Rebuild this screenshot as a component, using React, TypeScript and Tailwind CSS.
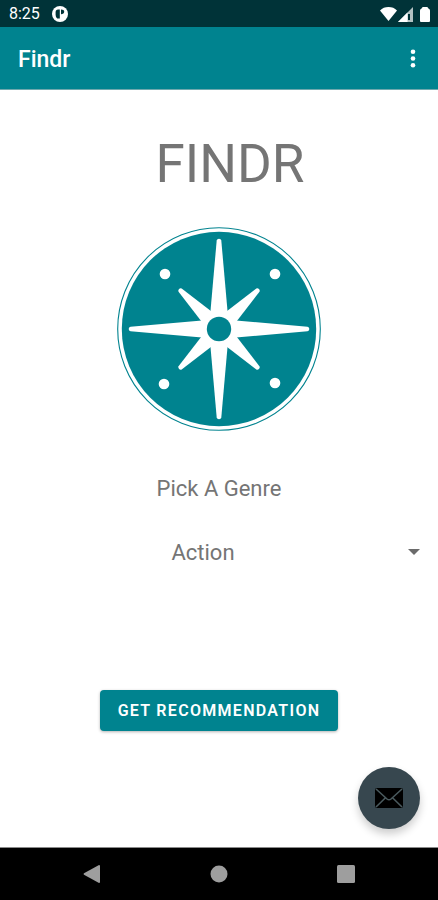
// Findr home screen: app bar, compass logo, genre picker and the
// recommendation button, framed by the Android status and navigation bars.
import { useState } from 'react'

const GENRES = ['Action', 'Adventure', 'Comedy', 'Drama', 'Horror', 'Romance']

export default function App() {
  const [genre, setGenre] = useState('Action')

  return (
    <div className="flex min-h-screen w-full flex-col bg-white font-['Roboto',sans-serif] text-[#757575]">
      <StatusBar />
      <AppBar />
      <main className="relative flex flex-1 flex-col items-center pt-[42px]">
        <h1 className="pl-[22px] text-[53px] leading-[64px]">FINDR</h1>
        <Compass />
        <label htmlFor="genre" className="mt-[42px] text-[22px] leading-8">
          Pick A Genre
        </label>
        <div className="relative mt-8 w-full">
          <select
            id="genre"
            value={genre}
            onChange={(e) => setGenre(e.target.value)}
            className="h-8 w-full appearance-none bg-transparent pr-8 text-center text-[22px] leading-8 outline-none"
          >
            {GENRES.map((g) => (
              <option key={g}>{g}</option>
            ))}
          </select>
          <svg
            className="pointer-events-none absolute top-3 right-[18px]"
            width="12"
            height="6"
            viewBox="0 0 12 6"
            fill="#6b6b6b"
          >
            <path d="M0 0h12L6 6z" />
          </svg>
        </div>
        <button className="mt-[121px] mb-28 h-[41px] rounded-[4px] bg-[#00838f] px-[18px] text-base font-semibold tracking-[1.3px] text-white shadow-[0_1px_3px_rgba(0,0,0,.3)]">
          GET RECOMMENDATION
        </button>
        <button
          aria-label="Send mail"
          className="absolute right-[18px] bottom-[18px] flex size-[62px] items-center justify-center rounded-full bg-[#37474f] shadow-[0_5px_8px_rgba(0,0,0,.2)]"
        >
          <MailIcon />
        </button>
      </main>
      <NavBar />
    </div>
  )
}

function StatusBar() {
  return (
    <div className="flex h-[27px] items-center justify-between bg-[#003338] pt-px pr-2 pl-[9px] text-white">
      <div className="flex items-center gap-3">
        <span className="text-base leading-5">8:25</span>
        <svg width="16" height="16" viewBox="0 0 16 16">
          <circle cx="8" cy="8" r="8" fill="#fff" />
          <path d="M7.800 3.500v9H5.200q-1.600-1.200-1.600-3.500V6q0-2.500 2.500-2.500z" fill="#003338" />
          <path d="M9 3.500q3.200 0 3.200 2.300T9 8.200z" fill="#003338" />
        </svg>
      </div>
      <div className="flex items-center">
        <svg width="17" height="14" viewBox="0 0 17 14" fill="#fff">
          <path d="M8.500 14L0 3.400C2.200 1.200 5.200 0 8.500 0S14.800 1.200 17 3.400z" />
        </svg>
        <svg className="ml-px" width="15" height="15" viewBox="0 0 15 15">
          <path d="M0 15L15 0v15z" fill="#b3c2c3" />
          <path d="M0 15L9.500 5.500V15z" fill="#fff" />
          <path d="M10 7h2v6h-2z" fill="#003338" />
        </svg>
        <svg className="ml-[7px]" width="10" height="15" viewBox="0 0 10 15" fill="#fff">
          <path d="M3 0h4q1 0 1.400 1.500Q10 2 10 3.500V14q0 1-1 1H1q-1 0-1-1V3.500Q0 2 1.600 1.500Q2 0 3 0z" />
        </svg>
      </div>
    </div>
  )
}

function AppBar() {
  return (
    <header className="flex h-[63px] items-center justify-between border-b border-[#6fa9ae] bg-[#00838f] px-[18px] text-white">
      <span className="pt-1 text-[23px] leading-8 font-medium">Findr</span>
      <button aria-label="More options" className="px-1 py-2">
        <svg width="6" height="20" viewBox="0 0 6 20" fill="#fff">
          <circle cx="3" cy="3.800" r="2.300" />
          <circle cx="3" cy="10.500" r="2.300" />
          <circle cx="3" cy="17.200" r="2.300" />
        </svg>
      </button>
    </header>
  )
}

// One long and one short ray, each drawn pointing up and turned round the hub.
function Compass() {
  return (
    <svg className="mt-[31px]" width="204" height="204" viewBox="-102 -102 204 204">
      <circle r="101.300" fill="#fff" stroke="#00838f" strokeWidth="1.100" />
      <circle r="97.200" fill="#00838f" />
      <g fill="#fff">
        {[0, 90, 180, 270].map((angle) => (
          <g key={angle} transform={`rotate(${angle})`}>
            <path d="M-8.600 -17L-2.300 -88.500Q-2 -90.300 0 -90.300T2.300 -88.500L8.600 -17L0 0z" />
            <path
              transform="rotate(45)"
              d="M-7 -18L-2.200 -55Q-1.800 -56.500 0 -56.500T2.200 -55L7 -18L0 0z"
            />
          </g>
        ))}
        <circle r="19.500" />
        <circle cx="-54" cy="-55" r="5.300" />
        <circle cx="56" cy="-55" r="5.300" />
        <circle cx="-55" cy="55" r="5.300" />
        <circle cx="56" cy="54" r="5.300" />
      </g>
      <circle r="12.200" fill="#00838f" />
    </svg>
  )
}

function MailIcon() {
  return (
    <svg width="28" height="20" viewBox="0 0 28 20">
      <rect width="28" height="20" rx="2" fill="#000" />
      <path
        d="M1 1L12 11Q14 12.600 16 11L27 1M1 19L10.500 9.800M27 19L17.500 9.800"
        fill="none"
        stroke="#4a5a5e"
        strokeWidth="1.600"
      />
    </svg>
  )
}

function NavBar() {
  return (
    <nav className="flex h-[53px] items-center justify-around border-t border-[#8a8a8a] bg-black px-7">
      <button aria-label="Back">
        <svg width="18" height="18" viewBox="0 0 18 18" fill="#9e9e9e">
          <path d="M16 0q1 0 1 1v16q0 1-1 1L1 9.800q-1-.8 0-1.600z" />
        </svg>
      </button>
      <button aria-label="Home">
        <svg width="18" height="18" viewBox="0 0 18 18" fill="#9e9e9e">
          <circle cx="9" cy="9" r="8.500" />
        </svg>
      </button>
      <button aria-label="Recent apps">
        <svg width="18" height="18" viewBox="0 0 18 18" fill="#9e9e9e">
          <rect width="18" height="18" rx="1.500" />
        </svg>
      </button>
    </nav>
  )
}
